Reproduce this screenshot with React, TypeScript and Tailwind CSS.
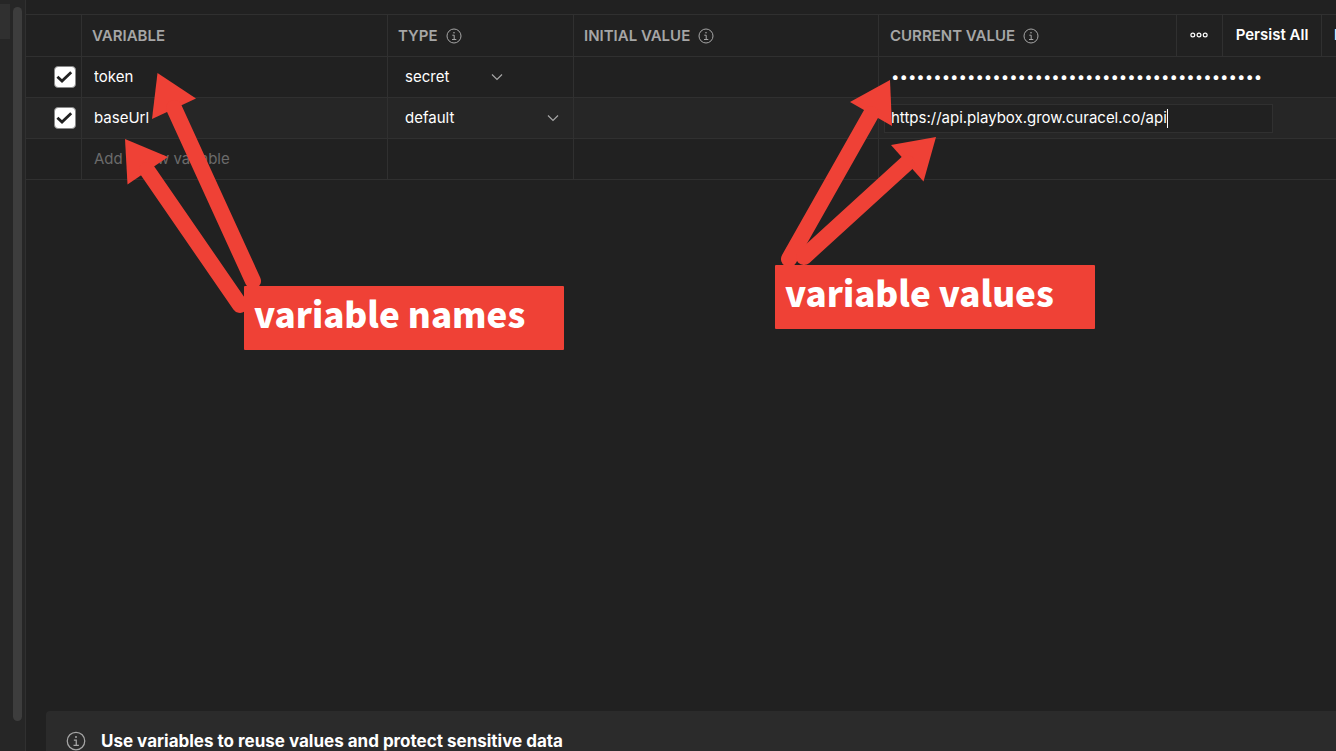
import { useState } from "react";

interface IVariable {
	name: string;
	type: string;
	value: string;
}

interface IArrowProps {
	head: string;
	from: [number, number];
	to: [number, number];
}

const variables: IVariable[] = [
	{ name: "token", type: "secret", value: "x".repeat(44) },
	{
		name: "baseUrl",
		type: "default",
		value: "https://api.playbox.grow.curacel.co/api",
	},
];

const arrows: IArrowProps[] = [
	{ head: "157.5,73 196,98.5 152,119", from: [174, 108], to: [253, 281] },
	{ head: "125,139 168,157 127.5,184.5", from: [147, 170], to: [240, 305] },
	{ head: "890,80 850,102 892,126", from: [871, 114], to: [789, 259] },
	{ head: "936,137 891,145 923.5,181.5", from: [907, 163], to: [804, 257] },
];

const InfoIcon = ({ className }: { className: string }) => (
	<svg
		viewBox="0 0 16 16"
		fill="none"
		stroke="currentColor"
		className={className}
		aria-hidden="true"
	>
		<circle cx="8" cy="8" r="7" />
		<path d="M6.3 7.2H8.2V11.3M6 11.5H10.3" />
		<circle cx="8" cy="4.8" r="0.8" fill="currentColor" stroke="none" />
	</svg>
);

const Chevron = () => (
	<svg
		viewBox="0 0 12 8"
		fill="none"
		stroke="#a6a6a6"
		strokeWidth="1.2"
		className="h-2 w-3 shrink-0 pointer-events-none"
		aria-hidden="true"
	>
		<path d="M1 1.5L6 6.5L11 1.5" />
	</svg>
);

const Arrow: React.FC<IArrowProps> = ({ head, from, to }) => (
	<g>
		<polygon points={head} />
		<line
			x1={from[0]}
			y1={from[1]}
			x2={to[0]}
			y2={to[1]}
			strokeWidth="16"
			strokeLinecap="round"
			stroke="#ef4136"
		/>
	</g>
);

const Check = ({ label }: { label: string }) => {
	const [checked, setChecked] = useState(true);

	return (
		<label className="grid size-[22px] ml-auto mr-[5px]">
			<input
				type="checkbox"
				aria-label={label}
				checked={checked}
				onChange={() => setChecked(!checked)}
				className="col-start-1 row-start-1 size-[22px] appearance-none rounded border border-[#8a8a8a] bg-white"
			/>
			{checked && (
				<svg
					viewBox="0 0 22 22"
					fill="none"
					stroke="#212121"
					strokeWidth="2.8"
					className="col-start-1 row-start-1 size-[22px] pointer-events-none"
				>
					<path d="M3.4 10.8L8 15L17.2 6.2" />
				</svg>
			)}
		</label>
	);
};

const th =
	"h-[43px] border-y border-[#303030] text-left font-semibold text-[#a6a6a6] whitespace-nowrap p-0";
const td = "h-[41px] border-b border-[#303030] p-0";
const divider = "border-r";

const VariableRow: React.FC<IVariable> = ({ name, type, value }) => {
	const isSecret = type === "secret";

	return (
		<tr className={isSecret ? "" : "bg-[#262626]"}>
			<td className={`${td} ${divider}`}>
				<Check label={`Enable ${name}`} />
			</td>
			<td className={`${td} ${divider}`}>
				<input
					aria-label="Variable name"
					defaultValue={name}
					className="block w-full bg-transparent pl-3 outline-none"
				/>
			</td>
			<td className={`${td} ${divider}`}>
				<div
					className={
						isSecret
							? "flex items-center pl-[17px] w-[115px]"
							: "flex items-center pl-[17px] w-[171px]"
					}
				>
					<select
						aria-label={`Type of ${name}`}
						defaultValue={type}
						className="min-w-0 flex-1 appearance-none bg-transparent outline-none"
					>
						<option value="default">default</option>
						<option value="secret">secret</option>
					</select>
					<Chevron />
				</div>
			</td>
			<td className={`${td} ${divider}`}>
				<input
					aria-label={`Initial value of ${name}`}
					className="block w-full bg-transparent pl-3 outline-none"
				/>
			</td>
			<td className={td}>
				{isSecret ? (
					<input
						type="password"
						aria-label={`Current value of ${name}`}
						defaultValue={value}
						className="block w-full bg-transparent pl-3 outline-none"
					/>
				) : (
					<div className="ml-[5px] mr-[63px] flex h-[29px] items-center border border-[#303030] bg-[#212121] pl-1.5">
						<input
							aria-label={`Current value of ${name}`}
							defaultValue={value}
							className="field-sizing-content bg-transparent outline-none"
						/>
						<span className="h-[19px] w-px bg-white" />
					</div>
				)}
			</td>
		</tr>
	);
};

const App = () => {
	return (
		<div className="relative flex h-screen overflow-hidden bg-[#212121] font-['Inter',sans-serif] text-[15px] leading-5 text-white">
			<aside className="flex w-[26px] shrink-0 items-start border-r border-[#303030] bg-[#262626]">
				<div className="mt-1 h-[35px] w-2.5 bg-[#303030]" />
				<div className="ml-[3px] mt-[7px] mb-[30px] w-[9px] self-stretch rounded-full bg-[#3d3d3d]" />
			</aside>

			<main className="flex min-w-0 flex-1 flex-col pt-3.5">
				<table className="w-full table-fixed border-separate border-spacing-0">
					<colgroup>
						<col className="w-14" />
						<col className="w-[306px]" />
						<col className="w-[186px]" />
						<col className="w-[305px]" />
						<col />
					</colgroup>
					<thead>
						<tr>
							<th className={`${th} ${divider}`} aria-label="Enabled" />
							<th className={`${th} ${divider}`}>
								<span className="pl-2.5">VARIABLE</span>
							</th>
							<th className={`${th} ${divider}`}>
								<div className="flex items-center gap-2 pl-2.5">
									TYPE
									<InfoIcon className="size-4" />
								</div>
							</th>
							<th className={`${th} ${divider}`}>
								<div className="flex items-center gap-2 pl-2.5">
									INITIAL VALUE
									<InfoIcon className="size-4" />
								</div>
							</th>
							<th className={th}>
								<div className="flex h-[41px] items-center">
									<div className="flex items-center gap-2 pl-[11px]">
										CURRENT VALUE
										<InfoIcon className="size-4" />
									</div>
									<div className="ml-auto flex h-full text-white">
										<button
											aria-label="More actions"
											className="flex w-[46px] items-center justify-center border-l border-[#303030] pr-0.5 pb-0.5"
										>
											<svg
												viewBox="0 0 20 6"
												fill="none"
												stroke="currentColor"
												strokeWidth="1.2"
												className="h-1.5 w-5"
											>
												<circle cx="3.8" cy="3" r="1.9" />
												<circle cx="10" cy="3" r="1.9" />
												<circle cx="16.2" cy="3" r="1.9" />
											</svg>
										</button>
										<button className="w-[99px] border-l border-[#303030] pb-0.5">
											Persist All
										</button>
										<button className="w-[15px] overflow-hidden border-l border-[#303030] pb-0.5 pl-3 text-left">
											Reset All
										</button>
									</div>
								</div>
							</th>
						</tr>
					</thead>
					<tbody>
						{variables.map((variable) => (
							<VariableRow key={variable.name} {...variable} />
						))}
						<tr>
							<td className={`${td} ${divider}`} />
							<td className={`${td} ${divider}`}>
								<input
									aria-label="New variable"
									placeholder="Add a new variable"
									className="block w-full bg-transparent pl-3 outline-none placeholder:text-[#6b6b6b]"
								/>
							</td>
							<td className={`${td} ${divider}`} />
							<td className={`${td} ${divider}`} />
							<td className={td} />
						</tr>
					</tbody>
				</table>

				<section className="ml-5 mt-auto flex items-center gap-[15px] rounded-tl bg-[#2b2b2b] pl-5 pt-5">
					<InfoIcon className="size-5 text-[#a6a6a6]" />
					<h2 className="text-[17px] leading-5 font-bold">
						Use variables to reuse values and protect sensitive data
					</h2>
				</section>
			</main>

			{/* callouts drawn over the table */}
			<svg
				width="1336"
				height="400"
				fill="#ef4136"
				className="absolute left-0 top-0 max-w-none pointer-events-none"
				aria-hidden="true"
			>
				{arrows.map((arrow) => (
					<Arrow key={arrow.head} {...arrow} />
				))}
			</svg>
			<p className="absolute left-[244px] top-[286px] h-16 w-80 rounded-[1px] bg-[#ef4136] pl-2.5 font-['Noto_Sans_CJK_SC',sans-serif] text-[35px] leading-[54px] font-black">
				variable names
			</p>
			<p className="absolute left-[775px] top-[265px] h-16 w-80 rounded-[1px] bg-[#ef4136] pl-2.5 font-['Noto_Sans_CJK_SC',sans-serif] text-[35px] leading-[54px] font-black">
				variable values
			</p>
		</div>
	);
};

export default App;
